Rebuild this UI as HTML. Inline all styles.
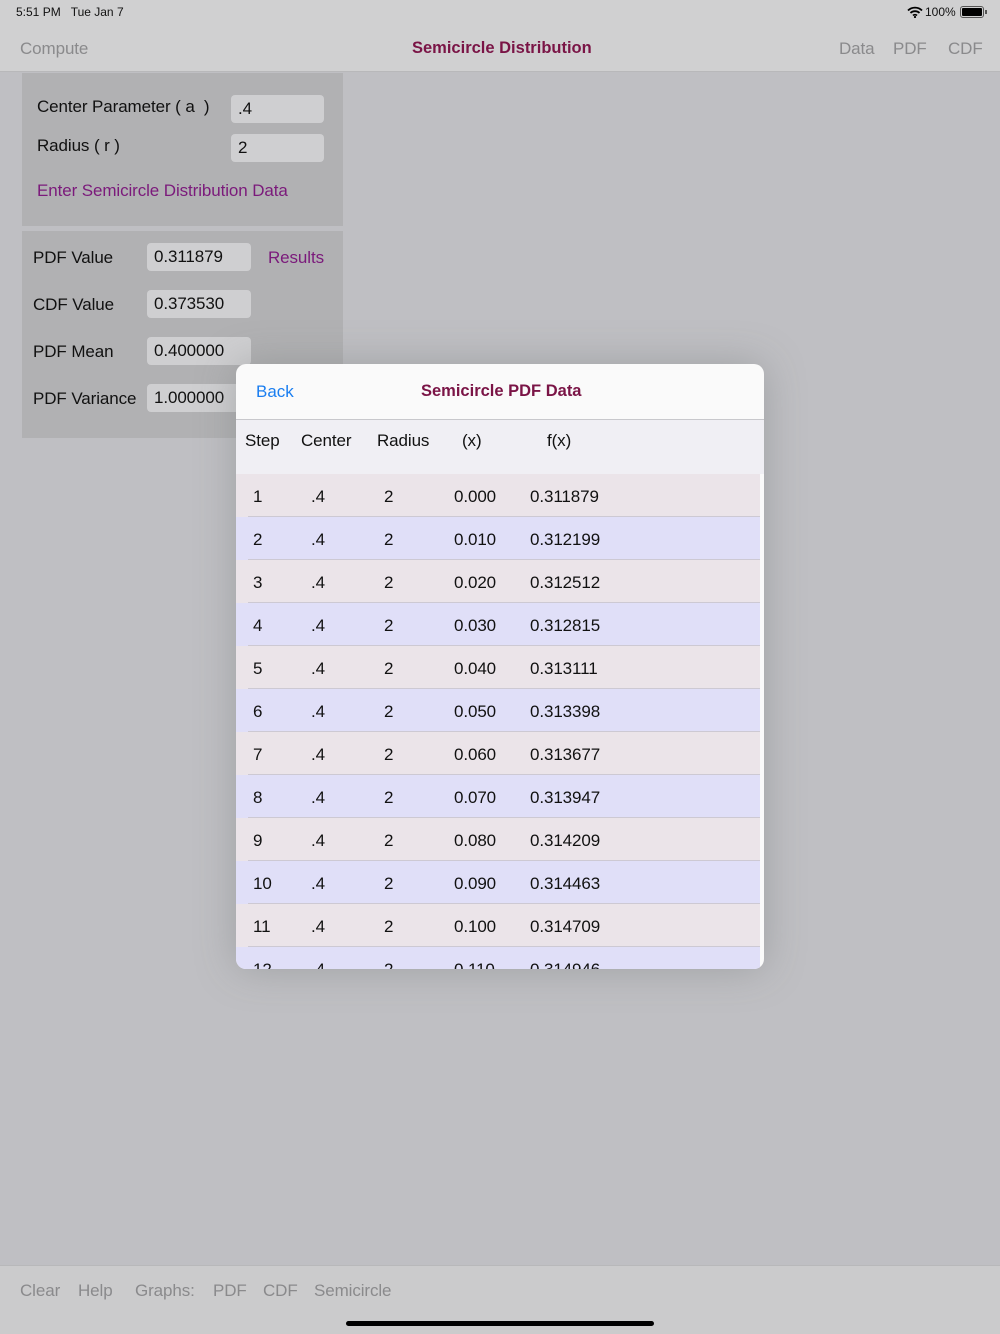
<!DOCTYPE html>
<html><head><meta charset="utf-8"><style>
*{margin:0;padding:0;box-sizing:border-box}
body{width:1000px;height:1334px;position:relative;overflow:hidden;background:#bfbfc3;font-family:"Liberation Sans",sans-serif;color:#111}
.a{position:absolute;white-space:nowrap}
.top{position:absolute;left:0;top:0;width:1000px;height:72px;background:#d0d0d1;border-bottom:1px solid #b8b8ba}
.panel{position:absolute;background:#b1b1b3}
.inp{position:absolute;background:#cfcfd1;border-radius:4px;font-size:17px;padding:4px 0 0 7px;color:#111;letter-spacing:-0.1px}
.lbl{font-size:17px;color:#111;letter-spacing:-0.1px}
.pur{color:#7b1a7b}
.bot{position:absolute;left:0;top:1265px;width:1000px;height:69px;background:#cbcbcc;border-top:1px solid #b8b8ba}
.gray{color:#8a8a8c;font-size:17px;letter-spacing:-0.1px}
.modal{position:absolute;left:236px;top:364px;width:528px;height:605px;background:#fafafa;border-radius:10px;overflow:hidden;box-shadow:0 0 40px rgba(120,125,125,.45)}
.hdr{position:absolute;left:0;top:55px;width:528px;height:55px;background:#f0eff4;border-top:1px solid #c8c8cc}
.row{position:absolute;left:0;width:524px;height:43px;font-size:17px;letter-spacing:-0.1px}
.row span{position:absolute;top:13px}
.sep{position:absolute;left:12px;right:0;bottom:0;height:1px;background:#cdc9d3}
</style></head><body>
<div class="top"></div>
<div class="a" style="left:16px;top:5px;font-size:12px">5:51 PM&nbsp;&nbsp;&nbsp;Tue Jan 7</div>
<div class="a" style="left:925px;top:5px;font-size:12px">100%</div>
<svg class="a" style="left:907px;top:6px" width="16" height="12" viewBox="0 0 16 12"><path d="M1 4.5a10 10 0 0 1 14 0M3.5 7a6.5 6.5 0 0 1 9 0M6 9.5a3 3 0 0 1 4 0" stroke="#000" stroke-width="1.8" fill="none"/><circle cx="8" cy="11" r="1.1"/></svg>
<div class="a" style="left:960px;top:6px;width:24px;height:12px;border:1px solid #555;border-radius:3px;padding:1px"><div style="width:100%;height:100%;background:#000;border-radius:1px"></div></div>
<div class="a" style="left:985px;top:10px;width:2px;height:4px;background:#555"></div>
<div class="a gray" style="left:20px;top:39px">Compute</div>
<div class="a" style="left:412px;top:39px;font-size:16.5px;font-weight:bold;color:#7a1446">Semicircle Distribution</div>
<div class="a gray" style="left:839px;top:39px">Data</div>
<div class="a gray" style="left:893px;top:39px">PDF</div>
<div class="a gray" style="left:948px;top:39px">CDF</div>

<div class="panel" style="left:22px;top:73px;width:321px;height:153px"></div>
<div class="a lbl" style="left:37px;top:97px">Center Parameter ( a&nbsp;&nbsp;)</div>
<div class="inp" style="left:231px;top:95px;width:93px;height:28px">.4</div>
<div class="a lbl" style="left:37px;top:136px">Radius ( r )</div>
<div class="inp" style="left:231px;top:134px;width:93px;height:28px">2</div>
<div class="a lbl pur" style="left:37px;top:181px">Enter Semicircle Distribution Data</div>

<div class="panel" style="left:22px;top:231px;width:321px;height:207px"></div>
<div class="a lbl" style="left:33px;top:248px">PDF Value</div>
<div class="inp" style="left:147px;top:243px;width:104px;height:28px">0.311879</div>
<div class="a lbl pur" style="left:268px;top:248px">Results</div>
<div class="a lbl" style="left:33px;top:295px">CDF Value</div>
<div class="inp" style="left:147px;top:290px;width:104px;height:28px">0.373530</div>
<div class="a lbl" style="left:33px;top:342px">PDF Mean</div>
<div class="inp" style="left:147px;top:337px;width:104px;height:28px">0.400000</div>
<div class="a lbl" style="left:33px;top:389px">PDF Variance</div>
<div class="inp" style="left:147px;top:384px;width:104px;height:28px">1.000000</div>

<div class="bot"></div>
<div class="a gray" style="left:20px;top:1281px">Clear</div>
<div class="a gray" style="left:78px;top:1281px">Help</div>
<div class="a gray" style="left:135px;top:1281px">Graphs:</div>
<div class="a gray" style="left:213px;top:1281px">PDF</div>
<div class="a gray" style="left:263px;top:1281px">CDF</div>
<div class="a gray" style="left:314px;top:1281px">Semicircle</div>
<div class="a" style="left:346px;top:1321px;width:308px;height:5px;border-radius:3px;background:#000"></div>

<div class="modal">
<div class="a" style="left:20px;top:18px;font-size:17px;color:#1a7ef0">Back</div>
<div class="a" style="left:185px;top:18px;font-size:16.5px;font-weight:bold;color:#7a1446">Semicircle PDF Data</div>
<div class="hdr">
<div class="a lbl" style="left:9px;top:11px">Step</div>
<div class="a lbl" style="left:65px;top:11px">Center</div>
<div class="a lbl" style="left:141px;top:11px">Radius</div>
<div class="a lbl" style="left:226px;top:11px">(x)</div>
<div class="a lbl" style="left:311px;top:11px">f(x)</div>
</div>
<div class="row" style="top:110px;background:#ebe4e9"><span style="left:17px">1</span><span style="left:75px">.4</span><span style="left:148px">2</span><span style="left:218px">0.000</span><span style="left:294px">0.311879</span><div class="sep"></div></div>
<div class="row" style="top:153px;background:#e0dff8"><span style="left:17px">2</span><span style="left:75px">.4</span><span style="left:148px">2</span><span style="left:218px">0.010</span><span style="left:294px">0.312199</span><div class="sep"></div></div>
<div class="row" style="top:196px;background:#ebe4e9"><span style="left:17px">3</span><span style="left:75px">.4</span><span style="left:148px">2</span><span style="left:218px">0.020</span><span style="left:294px">0.312512</span><div class="sep"></div></div>
<div class="row" style="top:239px;background:#e0dff8"><span style="left:17px">4</span><span style="left:75px">.4</span><span style="left:148px">2</span><span style="left:218px">0.030</span><span style="left:294px">0.312815</span><div class="sep"></div></div>
<div class="row" style="top:282px;background:#ebe4e9"><span style="left:17px">5</span><span style="left:75px">.4</span><span style="left:148px">2</span><span style="left:218px">0.040</span><span style="left:294px">0.313111</span><div class="sep"></div></div>
<div class="row" style="top:325px;background:#e0dff8"><span style="left:17px">6</span><span style="left:75px">.4</span><span style="left:148px">2</span><span style="left:218px">0.050</span><span style="left:294px">0.313398</span><div class="sep"></div></div>
<div class="row" style="top:368px;background:#ebe4e9"><span style="left:17px">7</span><span style="left:75px">.4</span><span style="left:148px">2</span><span style="left:218px">0.060</span><span style="left:294px">0.313677</span><div class="sep"></div></div>
<div class="row" style="top:411px;background:#e0dff8"><span style="left:17px">8</span><span style="left:75px">.4</span><span style="left:148px">2</span><span style="left:218px">0.070</span><span style="left:294px">0.313947</span><div class="sep"></div></div>
<div class="row" style="top:454px;background:#ebe4e9"><span style="left:17px">9</span><span style="left:75px">.4</span><span style="left:148px">2</span><span style="left:218px">0.080</span><span style="left:294px">0.314209</span><div class="sep"></div></div>
<div class="row" style="top:497px;background:#e0dff8"><span style="left:17px">10</span><span style="left:75px">.4</span><span style="left:148px">2</span><span style="left:218px">0.090</span><span style="left:294px">0.314463</span><div class="sep"></div></div>
<div class="row" style="top:540px;background:#ebe4e9"><span style="left:17px">11</span><span style="left:75px">.4</span><span style="left:148px">2</span><span style="left:218px">0.100</span><span style="left:294px">0.314709</span><div class="sep"></div></div>
<div class="row" style="top:583px;background:#e0dff8"><span style="left:17px">12</span><span style="left:75px">.4</span><span style="left:148px">2</span><span style="left:218px">0.110</span><span style="left:294px">0.314946</span></div>
</div>
</body></html>
